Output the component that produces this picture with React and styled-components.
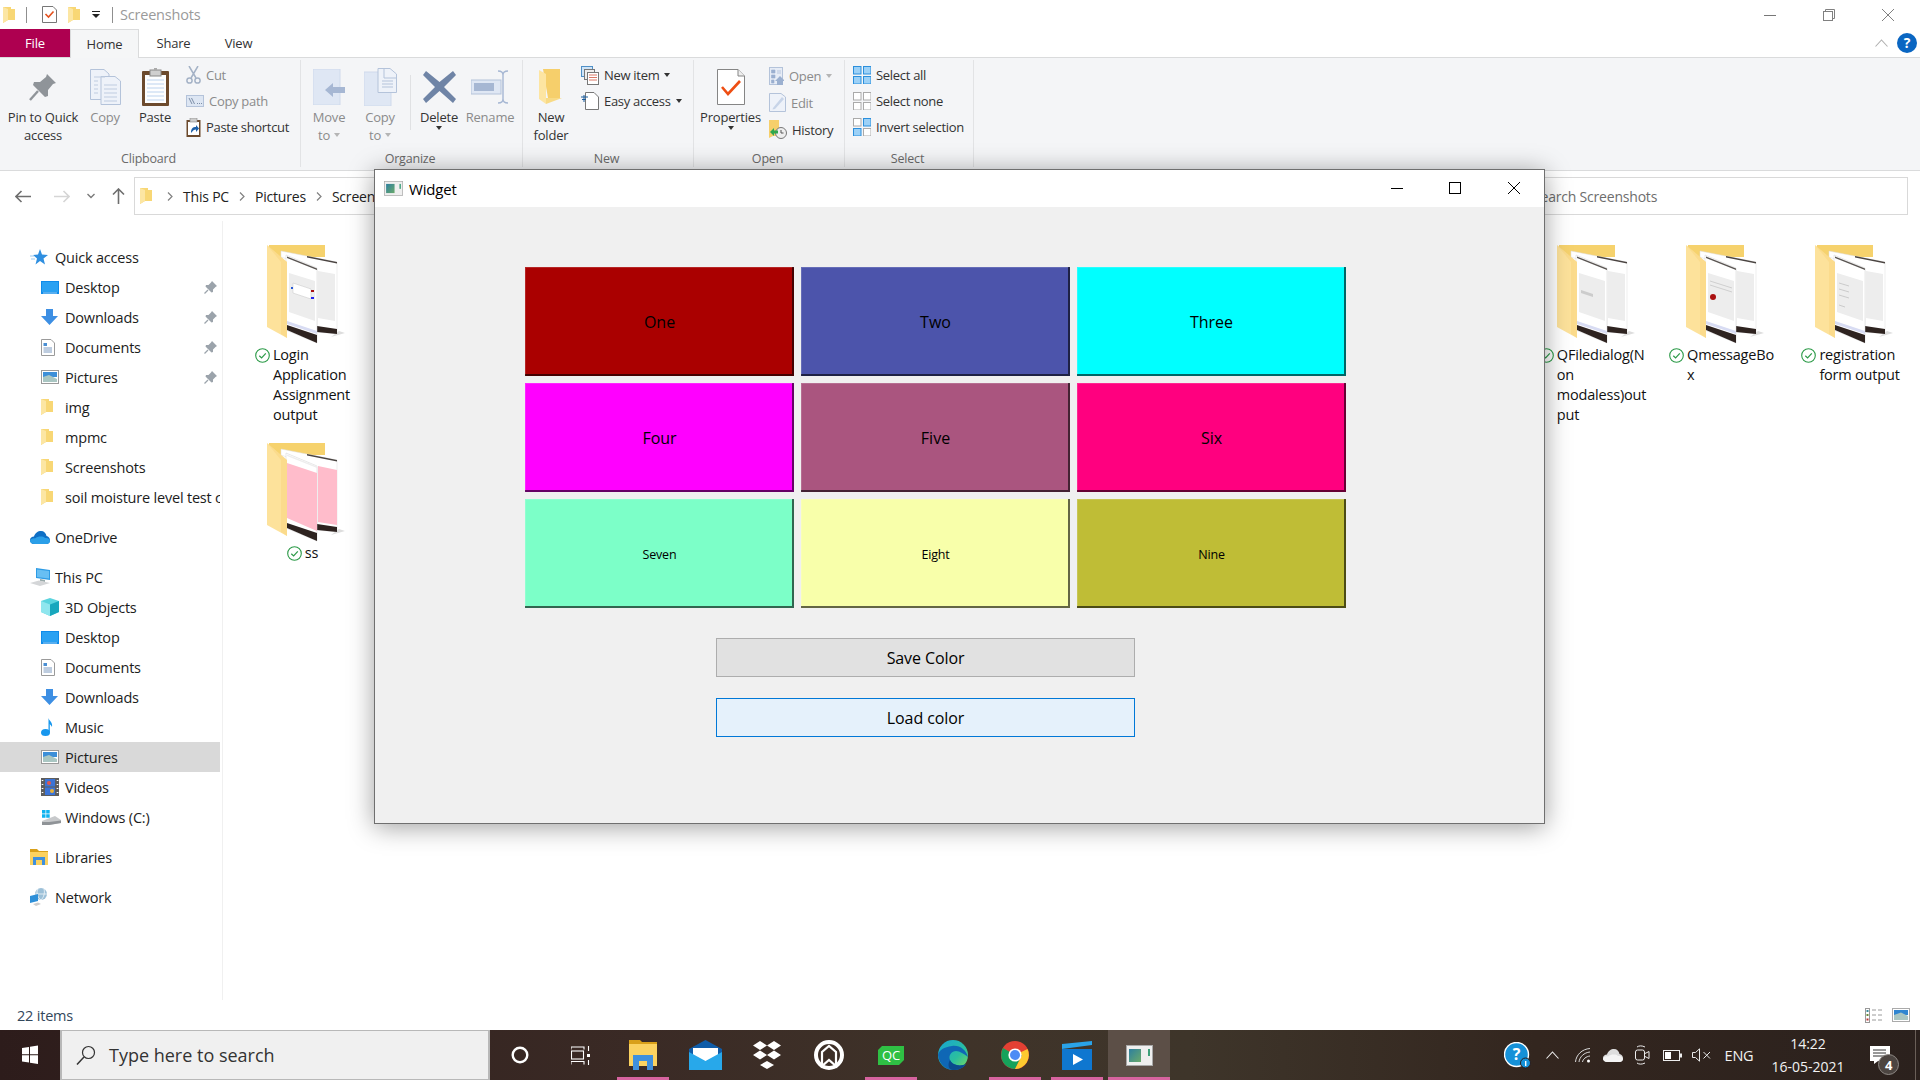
import React from "react";
import styled, { createGlobalStyle } from "styled-components";

const Global = createGlobalStyle`
  html, body { margin: 0; padding: 0; background: #fff; }
  * { box-sizing: border-box; }
  body { font-family: "Open Sans", "Noto Sans", "Liberation Sans", sans-serif; color: #1a1a1a; }
`;

const Page = styled.div`
  position: relative; width: 1920px; height: 1080px; overflow: hidden;
  display: flex; flex-direction: column; background: #fff; font-size: 14px; letter-spacing: -0.2px;
`;

/* ---------- title bar ---------- */
const TitleBar = styled.div`
  height: 29px; display: flex; align-items: center; padding-left: 3px; flex: none;
`;
const QuickSep = styled.span`
  width: 1px; height: 16px; background: ${p => (p.$ghost ? "transparent" : "#8f8f8f")}; margin: 0 ${p => p.$r}px 0 ${p => p.$l}px;
`;
const QuickTitle = styled.span`
  color: #9a9a9a; font-size: 14.5px; margin-left: 7px;
`;
const WinControls = styled.div`
  margin-left: auto; display: flex; align-items: center; padding-right: 3px;
`;
const WinControl = styled.span`
  width: 59px; display: flex; justify-content: center; align-items: center;
`;

/* ---------- tabs ---------- */
const TabRow = styled.div`
  height: 29px; display: flex; align-items: stretch; flex: none; border-bottom: 1px solid #dadbdc; padding-right: 3px;
`;
const FileTab = styled.div`
  width: 70px; background: #ae0050; color: #fff; font-size: 13px;
  display: flex; align-items: center; justify-content: center;
`;
const Tab = styled.div`
  width: ${p => p.$w}px; font-size: 13px; color: #333; display: flex; align-items: center; justify-content: center;
  ${p => p.$active && `background:#f5f6f7; border:1px solid #dadbdc; border-bottom:none; margin-bottom:-1px;`}
`;
const TabEnd = styled.div`
  margin-left: auto; display: flex; align-items: center; gap: 9px;
`;

/* ---------- ribbon ---------- */
const Ribbon = styled.div`
  height: 113px; display: flex; background: #f4f5f7; border-bottom: 1px solid #dadbdc; flex: none; padding: 2px 0 0;
`;
const Group = styled.div`
  width: ${p => p.$w}px; display: flex; flex-direction: column; border-right: 1px solid #e2e3e5; margin-bottom: 3px;
`;
const GroupBody = styled.div`
  flex: 1; display: flex; align-items: flex-start; padding-left: ${p => p.$pl || 0}px; min-height: 0;
`;
const GroupLabel = styled.div`
  height: 17px; line-height: 18px; text-align: center; font-size: 12.5px; color: #6a6a6a; padding-right: 3px;
`;
const Large = styled.div`
  width: ${p => p.$w}px; display: flex; flex-direction: column; align-items: center; padding-top: 6px; flex: none;
  color: ${p => (p.$off ? "#8b8b8b" : "#333")}; font-size: 13px; line-height: 18px; text-align: center;
`;
const LargeIcon = styled.div`
  height: 42px; display: flex; align-items: center; justify-content: center; margin-bottom: 0;
`;
const LabelLine = styled.div`
  display: flex; align-items: center; justify-content: center; gap: 4px; white-space: nowrap;
`;
const Caret = styled.span`
  display: inline-block; width: 0; height: 0; border-left: 3.5px solid transparent; border-right: 3.5px solid transparent;
  border-top: 4px solid ${p => (p.$off ? "#b5b5b5" : "#333")};
`;
const SmallCol = styled.div`
  display: flex; flex-direction: column; padding-top: 2px; flex: none; margin-left: ${p => p.$ml || 0}px;
`;
const SmallBtn = styled.div`
  height: ${p => p.$h || 26}px; display: flex; align-items: center; gap: 5px; font-size: 13px; white-space: nowrap; letter-spacing: -0.3px;
  color: ${p => (p.$off ? "#8b8b8b" : "#333")};
`;
const Divider = styled.span`
  width: 1px; height: 55px; margin: 15px 0 0 7px; background: #e0e1e3; flex: none;
`;

/* ---------- address row ---------- */
const AddressRow = styled.div`
  height: 50px; flex: none; display: flex; padding: 6px 12px 6px 0; align-items: stretch;
`;
const NavBtn = styled.span`
  width: ${p => p.$w}px; display: flex; align-items: center; justify-content: center; flex: none;
`;
const AddressBox = styled.div`
  flex: 1; margin-left: 2px; border: 1px solid #d9d9d9; display: flex; align-items: center; padding-left: 5px; gap: 10px;
  color: #222; font-size: 14px;
`;
const CrumbFolder = styled.span`
  display: flex; margin-right: 5px;
`;
const SearchBox = styled.div`
  width: 388px; border: 1px solid #d9d9d9; border-left: none; display: flex; align-items: center; padding-left: 13px;
  color: #6d6d6d; font-size: 14px;
`;

/* ---------- main ---------- */
const Main = styled.div`
  flex: 1; display: flex; min-height: 0;
`;
const Nav = styled.nav`
  width: 223px; flex: none; border-right: 1px solid #f0f0f0; padding-top: 21px; padding-right: 2px; overflow: hidden;
`;
const NavGroup = styled.div`
  margin-bottom: 10px;
`;
const NavRow = styled.div`
  height: 30px; display: flex; align-items: center; white-space: nowrap; overflow: hidden; position: relative;
  padding-left: ${p => (p.$sub ? 41 : 30)}px; background: ${p => (p.$selected ? "#d9d9d9" : "transparent")};
  color: #1c1c1c; font-size: 14.5px;
`;
const NavIcon = styled.span`
  width: ${p => (p.$sub ? 24 : 25)}px; display: flex; align-items: center; flex: none;
`;
const NavPin = styled.span`
  margin-left: auto; margin-right: 3px; display: flex;
`;
const FileGrid = styled.div`
  flex: 1; padding: 24px 0 0 15px; display: grid; grid-template-columns: repeat(13, 129px);
  grid-template-rows: 198px 120px; align-content: start;
`;
const FileCell = styled.div`
  display: flex; flex-direction: column; align-items: center; grid-column: ${p => p.$col}; grid-row: ${p => p.$row};
`;
const FileThumb = styled.div`
  height: 100px; width: 84px; display: flex; align-items: flex-start; padding-left: 6px;
`;
const FileLabel = styled.div`
  display: flex; gap: 3px; font-size: 14.5px; line-height: 20px; color: #111;
`;
const CheckSlot = styled.span`
  height: 20px; display: flex; align-items: center; flex: none;
`;
const FileLine = styled.div`
  white-space: nowrap;
`;

/* ---------- status ---------- */
const StatusBar = styled.div`
  height: 30px; flex: none; display: flex; align-items: center; padding: 0 10px 0 17px; font-size: 14.5px; color: #33475b;
`;
const StatusCount = styled.span`
  padding-right: 1px;
`;
const StatusIcons = styled.div`
  margin-left: auto; display: flex; gap: 9px; align-items: center;
`;

/* ---------- taskbar ---------- */
const Taskbar = styled.div`
  height: 50px; flex: none; display: flex; align-items: stretch; color: #fff; position: relative;
  background: linear-gradient(90deg, #2d1c1b 0%, #3a2a25 33%, #3f3329 50%, #3e352a 62%, #33261f 80%, #2b211d 100%);
`;
const StartBtn = styled.div`
  width: 60px; display: flex; align-items: center; justify-content: center; flex: none;
`;
const TaskSearch = styled.div`
  width: 430px; flex: none; background: #f0f0f0; border: 1px solid #b8b8b8; border-width: 1px 2px;
  display: flex; align-items: center; padding-left: 14px; gap: 13px; color: #333; font-size: 18px; letter-spacing: 0;
`;
const TaskBtn = styled.div`
  width: ${p => p.$w || 62}px; flex: none; display: flex; align-items: center; justify-content: center; position: relative;
  background: ${p => (p.$active ? "#5c4f47" : "transparent")};
  ${p => p.$open && `&::after{content:"";position:absolute;left:${p.$active ? 0 : 5}px;right:${p.$active ? 0 : 5}px;bottom:0;height:3px;background:#d6639f;}`}
`;
const Tray = styled.div`
  margin-left: auto; display: flex; align-items: stretch; padding-right: 15px; position: relative;
  &::after { content: ""; position: absolute; right: 4px; top: 0; bottom: 0; width: 1px; background: #6a5f58; }
`;
const TrayItem = styled.div`
  width: ${p => p.$w}px; display: flex; align-items: center; justify-content: center; flex: none; position: relative;
  font-size: 14.5px; color: #f2f2f2;
`;
const Clock = styled.div`
  display: flex; flex-direction: column; align-items: center; font-size: 14px; line-height: 23px; color: #f2f2f2; letter-spacing: 0;
`;
const NotifBadge = styled.span`
  position: absolute; right: 6px; top: 24px; width: 21px; height: 21px; border-radius: 50%;
  background: #4c4541; border: 1px solid #8f8a86; color: #fff; font-size: 13px; font-weight: 700;
  display: flex; align-items: center; justify-content: center;
`;

/* ---------- widget window ---------- */
const WidgetWindow = styled.div`
  position: absolute; left: 374px; top: 169px; width: 1171px; height: 655px;
  border: 1px solid #6f6f6f; background: #f0f0f0; box-shadow: 0 3px 24px rgba(0,0,0,.38);
  display: flex; flex-direction: column;
`;
const WidgetTitle = styled.div`
  height: 37px; flex: none; background: #fff; display: flex; align-items: center; padding-left: 9px; gap: 6px;
  font-size: 15px; color: #000;
`;
const WidgetControls = styled.div`
  margin-left: auto; display: flex; margin: 0 1px 2px auto;
`;
const WidgetControl = styled.span`
  width: 58.5px; display: flex; align-items: center; justify-content: center;
`;
const WidgetBody = styled.div`
  flex: 1; padding: 60px 0 0 150px;
`;
const ColorGrid = styled.div`
  display: grid; grid-template-columns: repeat(3, 269px); grid-auto-rows: 109px; gap: 7px; width: 821px;
`;
const ColorButton = styled.div`
  background: ${p => p.$c}; color: #000; font-size: ${p => p.$small ? 12.5 : 16}px; padding-top: ${p => p.$small ? 1 : 0}px;
  display: flex; align-items: center; justify-content: center; letter-spacing: ${p => p.$small ? -0.2 : 0}px;
  box-shadow: inset -2px -2px 0 rgba(0,0,0,.6), inset 1px 1px 0 rgba(255,255,255,.15);
`;
const ActionButton = styled.div`
  width: 419px; height: 39px; margin: ${p => p.$mt}px 0 0 191px; display: flex; align-items: center; justify-content: center;
  font-size: 16px; color: #000; letter-spacing: -0.1px;
  background: ${p => (p.$focus ? "#e5f1fb" : "#e1e1e1")};
  border: 1px solid ${p => (p.$focus ? "#0078d7" : "#adadad")};
`;

/* ---------- icons ---------- */
const FolderS = ({ w = 12, h = 16 }) => (
  <svg width={w} height={h} viewBox="0 0 12 16">
    <path d="M0 0 L8 0 L8 2 L12 2 L12 13 L5 13 L0 16 Z" fill="#f8d775" />
    <path d="M0 0 L5 2 L5 13 L0 16 Z" fill="#fce6a3" />
  </svg>
);
const CheckDoc = () => (
  <svg width="15" height="17" viewBox="0 0 15 17">
    <path d="M.5.5 H11 L14.5 4 V16.5 H.5 Z" fill="#fff" stroke="#777" />
    <path d="M3.5 8 L6.5 11 L11.5 5.5" fill="none" stroke="#e4511e" strokeWidth="1.6" />
  </svg>
);
const SmallDrop = () => (
  <svg width="8" height="8" viewBox="0 0 8 8"><rect x="0" y="0" width="8" height="1" fill="#222"/><path d="M0 3 H8 L4 7 Z" fill="#222"/></svg>
);
const MinLine = ({ c = "#777", w = 12 }) => (<svg width={w} height="12" viewBox={`0 0 ${w} 12`}><rect x="0" y="6" width={w} height="1" fill={c} /></svg>);
const RestoreI = () => (<svg width="12" height="12" viewBox="0 0 12 12" fill="none" stroke="#808080"><rect x=".5" y="2.5" width="9" height="9" /><path d="M2.5 2.5 V.5 H11.5 V9.5 H9.5" /></svg>);
const CloseI = ({ c = "#808080" }) => (<svg width="12" height="12" viewBox="0 0 12 12" stroke={c}><path d="M0 0 L12 12 M12 0 L0 12" /></svg>);
const MaxI = () => (<svg width="12" height="12" viewBox="0 0 12 12" fill="none" stroke="#000"><rect x=".5" y=".5" width="11" height="11" /></svg>);
const ChevUp = ({ c = "#b0b0b0", w = 13 }) => (<svg width={w} height="8" viewBox="0 0 13 8" fill="none" stroke={c} strokeWidth="1.1"><path d="M.5 7.5 L6.5 1 L12.5 7.5" /></svg>);
const HelpBlue = () => (
  <svg width="20" height="20" viewBox="0 0 20 20"><circle cx="10" cy="10" r="10" fill="#0a66c2" /><text x="10" y="15" textAnchor="middle" fontSize="14" fontWeight="700" fill="#fff" fontFamily="Open Sans">?</text></svg>
);
const PinBig = () => (
  <svg width="28" height="28" viewBox="0 0 28 28"><path d="M18 1 L27 10 L24 11 L19 17 L19 23 L16 24 L4 12 L5 9 L11 9 L17 4 Z" fill="#8f9499" /><path d="M9 18 L1 27" stroke="#8f9499" strokeWidth="2.4" /></svg>
);
const CopyBig = () => (
  <svg width="31" height="36" viewBox="0 0 31 36" fill="#eef2f9" stroke="#b4c3da">
    <path d="M.5.5 H14 L19 5 V30.5 H.5 Z" />
    <path d="M11 7.5 H25 L30.5 12 V35.5 H11 Z" />
    <path d="M4 8 H15 M4 12 H8 M4 16 H8 M4 20 H8 M4 24 H8 M14 16 H27 M14 20 H27 M14 24 H27 M14 28 H27 M14 32 H27" stroke="#bfcce0" />
  </svg>
);
const PasteBig = () => (
  <svg width="27" height="38" viewBox="0 0 27 38">
    <rect x="0" y="3" width="27" height="35" rx="1" fill="#6c4a2d" />
    <rect x="3" y="7" width="21" height="28" fill="#fdfeff" />
    <path d="M5 12 H22 M5 16 H22 M5 20 H22 M5 24 H22 M5 28 H22 M5 32 H22" stroke="#bcd3ee" />
    <rect x="8" y="2" width="11" height="6" fill="#cfcfcf" stroke="#888" /><rect x="12" y="0" width="3" height="3" fill="#aaa" />
  </svg>
);
const Scissors = () => (
  <svg width="15" height="18" viewBox="0 0 15 18" fill="none" stroke="#a4b2c6" strokeWidth="1.5"><path d="M3 0 L10 12 M12 0 L5 12" /><circle cx="3.5" cy="14.5" r="2.6" /><circle cx="11.5" cy="14.5" r="2.6" /></svg>
);
const CopyPathI = () => (
  <svg width="18" height="12" viewBox="0 0 18 12"><rect x=".5" y=".5" width="17" height="11" fill="#dde6f3" stroke="#b4c3da" /><path d="M3 3 L6 9 M5.5 3 L8.5 9" stroke="#7d8fa8" /><path d="M11 8.5 h1 M13 8.5 h1 M15 8.5 h1" stroke="#7d8fa8" /></svg>
);
const PasteShortI = () => (
  <svg width="15" height="19" viewBox="0 0 15 19"><rect x=".5" y="2" width="14" height="17" fill="#6c4a2d" /><rect x="2" y="4" width="11" height="13" fill="#fff" /><rect x="4" y="0" width="7" height="4" fill="#ccc" stroke="#888" strokeWidth=".6" /><path d="M5 15 C5 10 7 9 10 9 L10 7 L13 10.5 L10 14 L10 11.5 C8 11.5 7 12.5 5 15Z" fill="#1c5fa8" /></svg>
);
const MoveToI = () => (
  <svg width="33" height="36" viewBox="0 0 33 36"><rect x="0" y="0" width="27" height="36" fill="#dfe7f4" stroke="#cfdaec" /><path d="M12 21 L20 14 V18 H32 V24 H20 V28 Z" fill="#a6b7d3" /></svg>
);
const CopyToI = () => (
  <svg width="33" height="38" viewBox="0 0 33 38"><rect x="0" y="4" width="27" height="34" fill="#dfe7f4" stroke="#cfdaec" /><path d="M14 .5 H26 L32.5 6 V24.5 H14 Z" fill="#eef2f9" stroke="#b4c3da" /><path d="M20 1 V10 H32 M18 13 H29 M18 16 H29 M18 19 H29" stroke="#b4c3da" fill="none" /></svg>
);
const DeleteI = () => (
  <svg width="33" height="32" viewBox="0 0 33 32"><path d="M3 0 L16.5 11 L30 0 L33 4 L21 16 L33 28 L30 32 L16.5 20 L3 32 L0 28 L12 16 L0 4 Z" fill="#6f84a6" /></svg>
);
const RenameI = () => (
  <svg width="38" height="34" viewBox="0 0 38 34"><rect x="0" y="10" width="30" height="14" fill="#dfe7f4" stroke="#b4c3da" /><rect x="3" y="13" width="20" height="8" fill="#a6b7d3" /><path d="M27 1 C31 1 32 3 32 5 V29 C32 31 31 33 27 33 M37 1 C33 1 32 3 32 5 V29 C32 31 33 33 37 33" fill="none" stroke="#a6b7d3" strokeWidth="1.4" /></svg>
);
const NewFolderI = () => (
  <svg width="24" height="36" viewBox="0 0 24 36"><path d="M4 0 H21 V29 L9 29 Z" fill="#f6cf6b" /><path d="M0 1 L7 5 V35 L0 30 Z" fill="#fde5a2" /><path d="M7 5 L7 35 L23 29 V29 H7 Z" fill="#f8da85" /></svg>
);
const NewItemI = () => (
  <svg width="18" height="19" viewBox="0 0 18 19"><rect x=".5" y=".5" width="11" height="10" fill="#cfe4f7" stroke="#4f8fc6" /><rect x="3.5" y="3.5" width="10" height="10" fill="#eee" stroke="#777" /><rect x="6.5" y="6.5" width="11" height="12" fill="#fff" stroke="#777" /><path d="M8 9 H16 M8 11.5 H16 M8 14 H16" stroke="#d2553f" strokeWidth=".8" /></svg>
);
const EasyI = () => (
  <svg width="18" height="18" viewBox="0 0 18 18"><path d="M4.5.5 H13 L17.5 5 V17.5 H4.5 Z" fill="#fff" stroke="#777" /><path d="M0 5 H7 M1 7.5 H5 M3 3 V10" stroke="#1b5d9c" strokeWidth="1" /></svg>
);
const PropsI = () => (
  <svg width="28" height="36" viewBox="0 0 28 36"><path d="M.5.5 H21 L27.5 7 V35.5 H.5 Z" fill="#fff" stroke="#858585" /><path d="M21 .5 V7 H27.5" fill="#eee" stroke="#858585" /><path d="M5 18 L11 25 L23 12" fill="none" stroke="#ee4e13" strokeWidth="2.6" /></svg>
);
const OpenI = () => (
  <svg width="15" height="18" viewBox="0 0 15 18"><rect x=".5" y=".5" width="13" height="17" fill="#e6ecf6" stroke="#b4c3da" /><path d="M2.5 3 H6 V6 H2.5 Z M2.5 8 H6 V11 H2.5 Z M2.5 13 H5 V16 H2.5 Z M8 4 H12 M8 6 H12" fill="#9bb0d0" stroke="#9bb0d0" strokeWidth=".6" /><path d="M6 14 L11 9 L16 14 H14 V18 H8 V14 Z" fill="#9bb0d0" /></svg>
);
const EditI = () => (
  <svg width="17" height="19" viewBox="0 0 17 19"><path d="M.5 .5 H12 L16.5 4 V18.5 H.5 Z" fill="#eef2f9" stroke="#b4c3da" /><path d="M4 15 L13 4 L15 6 L6 16 L3.5 16.5 Z" fill="#c7d4e8" /></svg>
);
const HistoryI = () => (
  <svg width="18" height="19" viewBox="0 0 18 19"><path d="M0 0 H10 V16 H4 L0 18 Z" fill="#f6cf6b" /><circle cx="12" cy="13" r="5.5" fill="#eee" stroke="#777" /><path d="M12 10 V13 H14.5" stroke="#555" fill="none" /><path d="M1 12 L5 8 V10.5 H9 V13.5 H5 V16 Z" fill="#2fa84f" /></svg>
);
const SelGrid = ({ on }) => (
  <svg width="18" height="18" viewBox="0 0 18 18">
    {[[0, 0], [10, 0], [0, 10], [10, 10]].map(([x, y], i) => (
      <rect key={i} x={x + .5} y={y + .5} width="7.5" height="7.5" fill={on[i] ? "#9cd1f7" : "#fff"} stroke={on[i] ? "#2b8fdc" : "#aaa"} />
    ))}
  </svg>
);
const BackArrow = ({ c = "#6e6e6e" }) => (<svg width="16" height="13" viewBox="0 0 16 13" fill="none" stroke={c} strokeWidth="1.6"><path d="M16 6.5 H1 M6.5 1 L1 6.5 L6.5 12" /></svg>);
const FwdArrow = () => (<svg width="16" height="13" viewBox="0 0 16 13" fill="none" stroke="#d5d5d5" strokeWidth="1.6"><path d="M0 6.5 H15 M9.5 1 L15 6.5 L9.5 12" /></svg>);
const DownChev = () => (<svg width="8" height="6" viewBox="0 0 8 6" fill="none" stroke="#7a7a7a" strokeWidth="1.4"><path d="M.5 1 L4 4.5 L7.5 1" /></svg>);
const UpArrow = () => (<svg width="13" height="16" viewBox="0 0 13 16" fill="none" stroke="#6e6e6e" strokeWidth="1.6"><path d="M6.5 16 V1 M1 6.5 L6.5 1 L12 6.5" /></svg>);
const CrumbSep = () => (<svg width="6" height="9" viewBox="0 0 6 9" fill="none" stroke="#808080" strokeWidth="1.2"><path d="M1 .5 L5 4.5 L1 8.5" /></svg>);

const Star = () => (<svg width="18" height="16" viewBox="0 0 18 16"><path d="M10 0 L12 5.5 L18 6 L13.5 9.5 L15 15.5 L10 12 L5.5 15.5 L7 9.5 L3 6 L8 5.5 Z" fill="#2f8fe0" /><path d="M0 7 H4 M1 10 H5" stroke="#9ccbf0" /></svg>);
const Desktop = () => (<svg width="18" height="13" viewBox="0 0 18 13"><rect width="18" height="13" fill="#0f8bea" /><rect x="1" y="1" width="16" height="10" fill="#2aa1f2" /><rect x="2" y="11.5" width="14" height="1" fill="#fff" opacity=".6" /></svg>);
const DownI = () => (<svg width="17" height="16" viewBox="0 0 17 16"><path d="M5 0 H12 V7 H17 L8.5 16 L0 7 H5 Z" fill="#3d8fe3" /></svg>);
const Docs = () => (<svg width="14" height="17" viewBox="0 0 14 17"><path d="M.5 .5 H10 L13.5 4 V16.5 H.5 Z" fill="#fff" stroke="#9a9a9a" /><path d="M2.5 4 H6 V7 H2.5 Z" fill="#4a8fd3" /><path d="M2.5 9 H11 M2.5 11 H11 M2.5 13 H11" stroke="#7d9ac0" /></svg>);
const Pics = () => (<svg width="18" height="14" viewBox="0 0 18 14"><rect x=".5" y=".5" width="17" height="13" fill="#fff" stroke="#9a9a9a" /><rect x="2" y="2" width="14" height="5" fill="#3c8fd8" /><path d="M2 7 L8 5 L16 9 V12 H2 Z" fill="#a9c6c2" /></svg>);
const Pin = () => (<svg width="13" height="13" viewBox="0 0 13 13"><path d="M8 0 L13 5 L11.5 6 L9 8.5 V11 L7.5 11.5 L1.5 5.5 L2 4 H4.5 L7 1.5 Z" fill="#9ba3ab" /><path d="M4 9 L0.5 12.5" stroke="#9ba3ab" strokeWidth="1.3" /></svg>);
const Cloud = ({ c1 = "#0e6fc5", c2 = "#2b9fe8", w = 20 }) => (<svg width={w} height={w * .65} viewBox="0 0 20 13"><path d="M4 13 C1 13 0 11 0 9 C0 7 2 5.5 4 5.5 C5 2 8 0 11 0 C14 0 16 2 16.5 5 C18.5 5.5 20 7 20 9.5 C20 11.5 18.5 13 16.5 13 Z" fill={c1} /><path d="M5 13 C2 13 0 11.5 0 10 C0 8 3 7 5 7.5 C8 5 13 5 15 7 C18 6.5 20 8 20 10 C20 12 18 13 16.5 13 Z" fill={c2} /></svg>);
const PCI = () => (<svg width="21" height="18" viewBox="0 0 21 18"><path d="M6 0 L20 2 V12 L6 10 Z" fill="#2d9be5" /><path d="M7 1.5 L19 3 V10.5 L7 9 Z" fill="#68bff3" /><path d="M10 11 L15 12 V14 L10 13 Z" fill="#9aa" /><path d="M0 15 L9 12.5 L20 15 L10 18 Z" fill="#d4d6d8" /></svg>);
const Cube = () => (<svg width="18" height="18" viewBox="0 0 18 18"><path d="M9 0 L18 3 V14 L9 18 L0 14 V3 Z" fill="#5ad4de" /><path d="M0 3 L9 6.5 V18 L0 14 Z" fill="#8fe6ee" /><path d="M9 6.5 L18 3 V14 L9 18 Z" fill="#18a7bd" /></svg>);
const Music = () => (<svg width="12" height="18" viewBox="0 0 12 18"><ellipse cx="4.5" cy="14.5" rx="4.5" ry="3.5" fill="#1797ee" /><path d="M7.5 14 V0 C8 3 12 4 11 9 C10 7 9 6.5 8.8 6 V14.5 Z" fill="#1797ee" /></svg>);
const Video = () => (<svg width="18" height="18" viewBox="0 0 18 18"><rect width="18" height="18" fill="#5d5d5d" /><rect x="4" y="1" width="10" height="7.5" fill="#3b74d6" /><rect x="4" y="9.5" width="10" height="7.5" fill="#3b74d6" /><circle cx="8" cy="5" r="2" fill="#e2574c" /><circle cx="11" cy="13" r="2" fill="#e8b23a" /><path d="M1.5 2 v1 M1.5 6 v1 M1.5 10 v1 M1.5 14 v1 M16.5 2 v1 M16.5 6 v1 M16.5 10 v1 M16.5 14 v1" stroke="#fff" strokeWidth="1.6" /></svg>);
const Drive = () => (<svg width="20" height="15" viewBox="0 0 20 15"><path d="M1 0 H4.5 V3.5 H1 Z M5.2 0 H8.7 V3.5 H5.2 Z M1 4.2 H4.5 V7.7 H1 Z M5.2 4.2 H8.7 V7.7 H5.2 Z" fill="#10b3ef" /><path d="M1 11 L14 6 L20 10 V13 L8 15 H1 Z" fill="#c7c9cb" /><path d="M1 12 H8 L20 10.5 V13 L8 15 H1 Z" fill="#8f9397" /></svg>);
const Lib = () => (<svg width="18" height="16" viewBox="0 0 18 16"><path d="M0 0 H7 L9 2 H18 V4 H0 Z" fill="#d9a019" /><rect y="3" width="18" height="13" fill="#fbd260" /><path d="M3 16 V8 H15 V16 H12 V11 H6 V16 Z" fill="#3f90dd" /></svg>);
const Net = () => (<svg width="18" height="18" viewBox="0 0 18 18"><circle cx="11" cy="6" r="6" fill="#9cc0d8" /><path d="M8 1 C6 4 7 9 11 12 M14 1 C15 5 14 9 11 12 M5 6 H17" stroke="#fff" strokeWidth=".7" fill="none" /><path d="M0 8 L8 6 V13 L0 15 Z" fill="#2d8fd8" /><path d="M3 16 L8 14.5 L11 16 L6 18Z" fill="#ccc" /></svg>);

const CheckBadge = () => (<svg width="15" height="15" viewBox="0 0 15 15" fill="none" stroke="#2b9a47"><circle cx="7.5" cy="7.5" r="6.8" strokeWidth="1.1" /><path d="M4.3 7.8 L6.6 10 L10.8 5.3" strokeWidth="1.2" /></svg>);

const Thumb = ({ variant }) => {
  const pink = variant === "pink";
  const mid = pink ? "#ffbccb" : "#ededed";
  return (
    <svg width="78" height="100" viewBox="0 0 78 100">
      <path d="M2 0 H58 V12 H2 Z" fill="#f6d26d" />
      <path d="M64 92 L78 88 L72 86 Z" fill="#ddd" />
      <path d="M14 6 L70 17 V89 L50 87 V24 L14 12 Z" fill="#fff" stroke="#dedede" strokeWidth=".5" />
      <path d="M40 11 L70 17 V18.5 L40 12.5 Z" fill="#4a4441" />
      <path d="M51 26 L68 29 V76 L51 73 Z" fill={mid} />
      {pink && <path d="M51 23 L70 27 V82 L51 79 Z" fill={mid} />}
      <path d="M50 81 L70 84 V89 L50 87 Z" fill="#2e2320" />
      <path d="M19 10 L50 23 V98 L19 85 Z" fill="#fff" stroke="#d0d0d0" strokeWidth=".5" />
      <path d="M20 11.5 L50 23.5 V25 L20 13 Z" fill={pink ? "#eee" : "#5a5552"} />
      <path d="M22 28 L48 36 V76 L22 67 Z" fill={mid} />
      {pink && <path d="M20 20 L50 30 V88 L20 75 Z" fill={mid} />}
      {variant === "login" && <><path d="M26 38 L44 44 V54 L26 48Z" fill="#fff" stroke="#bbb" strokeWidth=".4" /><rect x="24" y="42" width="2" height="2" fill="#2a5bd7" /><rect x="44" y="45" width="3" height="2" fill="#a11" /><rect x="44" y="52" width="3" height="2" fill="#22e" /></>}
      {variant === "msg" && <><circle cx="27" cy="52" r="3" fill="#a11" /><path d="M24 36 L46 43 M24 40 L46 47" stroke="#bbb" strokeWidth=".6" /></>}
      {variant === "dlg" && <path d="M24 45 L36 49 V52 L24 48Z" fill="#ccc" />}
      {variant === "form" && <path d="M24 38 L34 41 M24 44 L34 47 M24 50 L34 53 M24 60 L30 62" stroke="#bbb" strokeWidth=".7" />}
      <path d="M20 80 L50 90 V98 L20 85 Z" fill="#2e2320" />
      {!pink && <path d="M20 76 L50 86 V89 L20 79 Z" fill="#d8dcf3" />}
      <path d="M0 0 L20 17 V93 L0 82 Z" fill="#fde29b" />
      <path d="M0 0 L20 17 V93 L14 89 V17 Z" fill="#f8d27a" opacity=".45" />
    </svg>
  );
};

const ListV = () => (<svg width="18" height="15" viewBox="0 0 18 15"><rect x=".5" y=".5" width="4" height="14" fill="#fff" stroke="#999" /><rect x="1.5" y="2" width="2" height="2" fill="#3a8a9a" /><rect x="1.5" y="6" width="2" height="2" fill="#6a8a3a" /><rect x="1.5" y="10.5" width="2" height="2" fill="#b33" /><path d="M7 2 H11 M13 2 H17 M7 7 H11 M13 7 H17 M7 12 H11 M13 12 H17" stroke="#9a9a9a" /></svg>);
const TileV = () => (<svg width="18" height="14" viewBox="0 0 18 14"><rect x=".5" y=".5" width="17" height="13" fill="#fff" stroke="#aaa" /><rect x="2" y="2" width="14" height="5" fill="#2f86d1" /><path d="M2 7 L9 4.5 L16 8 V12 H2 Z" fill="#a9c6c2" /></svg>);

const WinLogo = () => (<svg width="16" height="20" viewBox="0 0 16 20"><path d="M0 3 L7 2 V9.3 H0 Z M8 1.8 L16 .5 V9.3 H8 Z M0 10.2 H7 V17.5 L0 16.5 Z M8 10.2 H16 V19 L8 17.8 Z" fill="#fff" /></svg>);
const Magnifier = () => (<svg width="20" height="20" viewBox="0 0 20 20" fill="none" stroke="#333" strokeWidth="1.2"><circle cx="12.5" cy="7.5" r="6" /><path d="M8 12 L1 19.5" strokeWidth="1.5" /></svg>);
const Ring = () => (<svg width="18" height="18" viewBox="0 0 18 18" fill="none" stroke="#fff" strokeWidth="2.4"><circle cx="9" cy="9" r="7.3" /></svg>);
const TaskView = () => (<svg width="20" height="19" viewBox="0 0 20 19" fill="none" stroke="#fff" strokeWidth="1.1"><rect x=".5" y="5" width="12" height="8" /><path d="M0 1 H13 M0 .5 v3 M13 .5 v3 M0 18.5 v-3 H13 v3 M17.5 0 V5 M17.5 14 V19" /><rect x="16" y="8" width="3" height="3" fill="#fff" stroke="none" /></svg>);
const Explorer = () => (<svg width="28" height="30" viewBox="0 0 28 30"><path d="M0 0 H11 L13 2 H28 V6 H0 Z" fill="#d9a019" /><rect y="4" width="28" height="22" fill="#fbd260" /><path d="M4 30 V15 H24 V30 H18 V21 H10 V30 Z" fill="#3f90dd" /></svg>);
const Mail = () => (<svg width="33" height="30" viewBox="0 0 33 30"><path d="M0 9 L16.5 0 L33 9 V30 H0 Z" fill="#0f5ca8" /><path d="M4 8 H29 V18 L16.5 24 L4 18 Z" fill="#fff" /><path d="M0 12 L16.5 21 L33 12 V30 H0 Z" fill="#28a8ea" /></svg>);
const Dropbox = () => (<svg width="30" height="28" viewBox="0 0 30 28" fill="#fff"><path d="M8 0 L15 4.5 L8 9 L1 4.5 Z M22 0 L29 4.5 L22 9 L15 4.5 Z M8 9.5 L15 14 L8 18.5 L1 14 Z M22 9.5 L29 14 L22 18.5 L15 14 Z M15 20 L22 24 L15 28 L8 24 Z" /></svg>);
const RoundLogo = () => (<svg width="30" height="30" viewBox="0 0 30 30"><circle cx="15" cy="15" r="13" fill="none" stroke="#fff" strokeWidth="4" /><path d="M8 26 V12 L15 6 L22 12 V26 L15 20 Z" fill="none" stroke="#fff" strokeWidth="2.2" /></svg>);
const QC = () => (<svg width="26" height="19" viewBox="0 0 26 19"><path d="M4 0 H26 V14 L21 19 H0 V4 Z" fill="#2fc044" /><text x="13" y="14" textAnchor="middle" fontSize="13" fill="#fff" fontFamily="Open Sans">QC</text></svg>);
const Edge = () => (<svg width="30" height="30" viewBox="0 0 30 30"><defs><linearGradient id="eg" x1="0" y1="0" x2="1" y2="1"><stop offset="0" stopColor="#16a3d5" /><stop offset=".6" stopColor="#2bbf9f" /><stop offset="1" stopColor="#7fdc5a" /></linearGradient></defs><circle cx="15" cy="15" r="15" fill="url(#eg)" /><path d="M0 15 C1 24 8 30 15 30 C21 30 25 28 28 24 C22 27 14 25 12 20 C10 15 14 11 18 11 C22 11 26 14 30 17 C28 10 22 5 14 6 C6 7 1 10 0 15 Z" fill="#0f67b5" /><path d="M12 20 C14 25 22 27 28 24 C25 28 20 30 15 30 C11 30 9 25 12 20 Z" fill="#0b4a8c" /></svg>);
const Chrome = () => (<svg width="28" height="28" viewBox="0 0 28 28"><circle cx="14" cy="14" r="14" fill="#e44033" /><path d="M14 14 L2 7 A14 14 0 0 0 14 28 L21 14 Z" fill="#16a25b" /><path d="M14 14 L26.5 8 A14 14 0 0 1 14 28 L21 14 Z" fill="#fdc92f" /><circle cx="14" cy="14" r="6.6" fill="#fff" /><circle cx="14" cy="14" r="5" fill="#4c8bf5" /></svg>);
const Film = () => (<svg width="30" height="29" viewBox="0 0 30 29"><path d="M0 3 L30 0 V4 L0 8 Z" fill="#2aa3e8" /><path d="M0 8 H30 V29 H0 Z" fill="#0f77d0" /><path d="M11 13 L21 18.5 L11 24 Z" fill="#fff" /></svg>);
const WidgetIcon = ({ w = 27, h = 21 }) => (<svg width={w} height={h} viewBox="0 0 27 21"><rect x=".5" y=".5" width="26" height="20" fill="#efefef" stroke="#a8a8a8" /><defs><linearGradient id="wg" x1="0" y1="0" x2="1" y2="1"><stop offset="0" stopColor="#2d7f9f" /><stop offset="1" stopColor="#6aaa6a" /></linearGradient></defs><rect x="3" y="4" width="12" height="13" fill="url(#wg)" /><rect x="22" y="4" width="2" height="7" fill="#3da07a" /></svg>);

const HelpTray = () => (<svg width="27" height="27" viewBox="0 0 27 27"><circle cx="12.5" cy="12.5" r="12" fill="#1591d8" stroke="#fff" strokeWidth="1.4" /><text x="12.5" y="18" textAnchor="middle" fontSize="16" fontWeight="700" fill="#fff" fontFamily="Open Sans">?</text><circle cx="21.5" cy="21" r="5" fill="#1591d8" stroke="#2d1c1b" /><rect x="21" y="19" width="1.4" height="5" fill="#fff" /></svg>);
const Wifi = () => (<svg width="16" height="15" viewBox="0 0 16 15" fill="none" stroke="#d8d8d8" strokeWidth="1"><path d="M.5 14 C1 7 7 1 15 .5 M4 14 C4.5 9 9 4.5 15 4 M7.5 14 C8 11 11 8.5 15 8" /><circle cx="13.5" cy="13" r="1.5" fill="#fff" stroke="none" /></svg>);
const Meet = () => (<svg width="15" height="20" viewBox="0 0 15 20" fill="none" stroke="#eee" strokeWidth="1"><rect x=".5" y="5" width="9" height="10" rx="2" /><path d="M10 8.5 L14 6.5 V13.5 L10 11.5 M2 2 C4 .5 7 .5 10 2 M2 18 C4 19.5 7 19.5 10 18" /></svg>);
const Battery = () => (<svg width="19" height="11" viewBox="0 0 19 11"><rect x=".5" y=".5" width="16" height="10" fill="none" stroke="#eee" /><rect x="2" y="2" width="6" height="7" fill="#fff" /><rect x="17" y="3.5" width="2" height="4" fill="#eee" /></svg>);
const Mute = () => (<svg width="19" height="14" viewBox="0 0 19 14" fill="none" stroke="#e8e8e8"><path d="M.5 4.5 H3.5 L7.5 .8 V13.2 L3.5 9.5 H.5 Z M11.5 4 L18 10.5 M18 4 L11.5 10.5" /></svg>);
const Notif = () => (<svg width="20" height="18" viewBox="0 0 20 18"><path d="M0 0 H20 V15 H8 L4 18 V15 H0 Z" fill="#fff" /><path d="M3 4 H16 M3 7 H16 M3 10 H16" stroke="#333" /></svg>);

const Labels = ({ lines, caret, off }) => lines.map((l, i) => (
  <LabelLine key={i}>{l}{caret && i === lines.length - 1 && <Caret $off={off} />}</LabelLine>
));

const Big = ({ w, icon, lines, caret, off, under }) => (
  <Large $w={w} $off={off}>
    <LargeIcon>{icon}</LargeIcon>
    <Labels lines={lines} caret={caret} off={off} />
    {under && <LabelLine><Caret /></LabelLine>}
  </Large>
);

const pinned = [["Desktop", <Desktop />], ["Downloads", <DownI />], ["Documents", <Docs />], ["Pictures", <Pics />]];
const recent = ["img", "mpmc", "Screenshots", "soil moisture level test circuit"];
const pc = [["3D Objects", <Cube />], ["Desktop", <Desktop />], ["Documents", <Docs />], ["Downloads", <DownI />], ["Music", <Music />], ["Pictures", <Pics />, true], ["Videos", <Video />], ["Windows (C:)", <Drive />]];

const files = [
  { col: 1, row: 1, v: "login", lines: ["Login", "Application", "Assignment", "output"] },
  { col: 11, row: 1, v: "dlg", lines: ["QFiledialog(N", "on", "modaless)out", "put"] },
  { col: 12, row: 1, v: "msg", lines: ["QmessageBo", "x"] },
  { col: 13, row: 1, v: "form", lines: ["registration", "form output"] },
  { col: 1, row: 2, v: "pink", lines: ["ss"] },
];

const colors = [
  ["One", "#aa0000"], ["Two", "#4c54ab"], ["Three", "#00ffff"],
  ["Four", "#ff00ff"], ["Five", "#aa557f"], ["Six", "#ff007f"],
  ["Seven", "#7cffc8", true], ["Eight", "#f8ffaa", true], ["Nine", "#bfbd36", true],
];

export default function App() {
  return (
    <Page>
      <Global />
      <TitleBar>
        <FolderS />
        <QuickSep $l={11} $r={15} />
        <CheckDoc />
        <QuickSep $l={10} $r={0} $ghost />
        <FolderS />
        <QuickSep $l={11} $r={0} $ghost />
        <SmallDrop />
        <QuickSep $l={12} $r={0} />
        <QuickTitle>Screenshots</QuickTitle>
        <WinControls>
          <WinControl><MinLine /></WinControl>
          <WinControl><RestoreI /></WinControl>
          <WinControl><CloseI /></WinControl>
        </WinControls>
      </TitleBar>
      <TabRow>
        <FileTab>File</FileTab>
        <Tab $w={69} $active>Home</Tab>
        <Tab $w={69}>Share</Tab>
        <Tab $w={61}>View</Tab>
        <TabEnd><ChevUp /><HelpBlue /></TabEnd>
      </TabRow>
      <Ribbon>
        <Group $w={301}>
          <GroupBody>
            <Big w={86} icon={<PinBig />} lines={["Pin to Quick", "access"]} />
            <Big w={38} off icon={<CopyBig />} lines={["Copy"]} />
            <Big w={62} icon={<PasteBig />} lines={["Paste"]} />
            <SmallCol>
              <SmallBtn $off><Scissors />Cut</SmallBtn>
              <SmallBtn $off><CopyPathI />Copy path</SmallBtn>
              <SmallBtn><PasteShortI />Paste shortcut</SmallBtn>
            </SmallCol>
          </GroupBody>
          <GroupLabel>Clipboard</GroupLabel>
        </Group>
        <Group $w={222}>
          <GroupBody>
            <Big w={56} off icon={<MoveToI />} lines={["Move", "to"]} caret />
            <Big w={46} off icon={<CopyToI />} lines={["Copy", "to"]} caret />
            <Divider />
            <Big w={56} icon={<DeleteI />} lines={["Delete"]} under />
            <Big w={46} off icon={<RenameI />} lines={["Rename"]} />
          </GroupBody>
          <GroupLabel>Organize</GroupLabel>
        </Group>
        <Group $w={171}>
          <GroupBody>
            <Big w={56} icon={<NewFolderI />} lines={["New", "folder"]} />
            <SmallCol $ml={2}>
              <SmallBtn><NewItemI />New item<Caret /></SmallBtn>
              <SmallBtn><EasyI />Easy access<Caret /></SmallBtn>
            </SmallCol>
          </GroupBody>
          <GroupLabel>New</GroupLabel>
        </Group>
        <Group $w={151}>
          <GroupBody>
            <Big w={73} icon={<PropsI />} lines={["Properties"]} under />
            <SmallCol $ml={2}>
              <SmallBtn $h={27} $off><OpenI />Open<Caret $off /></SmallBtn>
              <SmallBtn $h={27} $off><EditI />Edit</SmallBtn>
              <SmallBtn $h={27}><HistoryI />History</SmallBtn>
            </SmallCol>
          </GroupBody>
          <GroupLabel>Open</GroupLabel>
        </Group>
        <Group $w={129}>
          <GroupBody $pl={8}>
            <SmallCol>
              <SmallBtn><SelGrid on={[1, 1, 1, 1]} />Select all</SmallBtn>
              <SmallBtn><SelGrid on={[0, 0, 0, 0]} />Select none</SmallBtn>
              <SmallBtn><SelGrid on={[0, 1, 1, 0]} />Invert selection</SmallBtn>
            </SmallCol>
          </GroupBody>
          <GroupLabel>Select</GroupLabel>
        </Group>
      </Ribbon>
      <AddressRow>
        <NavBtn $w={46}><BackArrow /></NavBtn>
        <NavBtn $w={32}><FwdArrow /></NavBtn>
        <NavBtn $w={26}><DownChev /></NavBtn>
        <NavBtn $w={28}><UpArrow /></NavBtn>
        <AddressBox>
          <CrumbFolder><FolderS /></CrumbFolder>
          <CrumbSep />This PC<CrumbSep />Pictures<CrumbSep />Screenshots
        </AddressBox>
        <SearchBox>Search Screenshots</SearchBox>
      </AddressRow>
      <Main>
        <Nav>
          <NavGroup>
            <NavRow><NavIcon><Star /></NavIcon>Quick access</NavRow>
            {pinned.map(([t, ic]) => (
              <NavRow key={t} $sub><NavIcon $sub>{ic}</NavIcon>{t}<NavPin><Pin /></NavPin></NavRow>
            ))}
            {recent.map(t => (
              <NavRow key={t} $sub><NavIcon $sub><FolderS /></NavIcon>{t}</NavRow>
            ))}
          </NavGroup>
          <NavGroup>
            <NavRow><NavIcon><Cloud /></NavIcon>OneDrive</NavRow>
          </NavGroup>
          <NavGroup>
            <NavRow><NavIcon><PCI /></NavIcon>This PC</NavRow>
            {pc.map(([t, ic, sel]) => (
              <NavRow key={t} $sub $selected={sel}><NavIcon $sub>{ic}</NavIcon>{t}</NavRow>
            ))}
          </NavGroup>
          <NavGroup>
            <NavRow><NavIcon><Lib /></NavIcon>Libraries</NavRow>
          </NavGroup>
          <NavGroup>
            <NavRow><NavIcon><Net /></NavIcon>Network</NavRow>
          </NavGroup>
        </Nav>
        <FileGrid>
          {files.map(f => (
            <FileCell key={f.lines[0]} $col={f.col} $row={f.row}>
              <FileThumb><Thumb variant={f.v} /></FileThumb>
              <FileLabel>
                <CheckSlot><CheckBadge /></CheckSlot>
                <div>{f.lines.map(l => <FileLine key={l}>{l}</FileLine>)}</div>
              </FileLabel>
            </FileCell>
          ))}
        </FileGrid>
      </Main>
      <StatusBar>
        <StatusCount>22 items</StatusCount>
        <StatusIcons><ListV /><TileV /></StatusIcons>
      </StatusBar>
      <Taskbar>
        <StartBtn><WinLogo /></StartBtn>
        <TaskSearch><Magnifier />Type here to search</TaskSearch>
        <TaskBtn $w={60}><Ring /></TaskBtn>
        <TaskBtn><TaskView /></TaskBtn>
        <TaskBtn $open><Explorer /></TaskBtn>
        <TaskBtn><Mail /></TaskBtn>
        <TaskBtn><Dropbox /></TaskBtn>
        <TaskBtn><RoundLogo /></TaskBtn>
        <TaskBtn $open><QC /></TaskBtn>
        <TaskBtn><Edge /></TaskBtn>
        <TaskBtn $open><Chrome /></TaskBtn>
        <TaskBtn $open><Film /></TaskBtn>
        <TaskBtn $open $active><WidgetIcon /></TaskBtn>
        <Tray>
          <TrayItem $w={40}><HelpTray /></TrayItem>
          <TrayItem $w={30}><ChevUp c="#eee" w={15} /></TrayItem>
          <TrayItem $w={31}><Wifi /></TrayItem>
          <TrayItem $w={29}><Cloud c1="#ddd" c2="#f4f4f4" /></TrayItem>
          <TrayItem $w={31}><Meet /></TrayItem>
          <TrayItem $w={28}><Battery /></TrayItem>
          <TrayItem $w={30}><Mute /></TrayItem>
          <TrayItem $w={46}>ENG</TrayItem>
          <TrayItem $w={92}><Clock><span>14:22</span><span>16-05-2021</span></Clock></TrayItem>
          <TrayItem $w={51}><Notif /><NotifBadge>4</NotifBadge></TrayItem>
        </Tray>
      </Taskbar>
      <WidgetWindow>
        <WidgetTitle>
          <WidgetIcon w={19} h={15} />Widget
          <WidgetControls>
            <WidgetControl><MinLine c="#000" /></WidgetControl>
            <WidgetControl><MaxI /></WidgetControl>
            <WidgetControl><CloseI c="#000" /></WidgetControl>
          </WidgetControls>
        </WidgetTitle>
        <WidgetBody>
          <ColorGrid>
            {colors.map(([t, c, small]) => <ColorButton key={t} $c={c} $small={small}>{t}</ColorButton>)}
          </ColorGrid>
          <ActionButton $mt={30}>Save Color</ActionButton>
          <ActionButton $mt={21} $focus>Load color</ActionButton>
        </WidgetBody>
      </WidgetWindow>
    </Page>
  );
}
